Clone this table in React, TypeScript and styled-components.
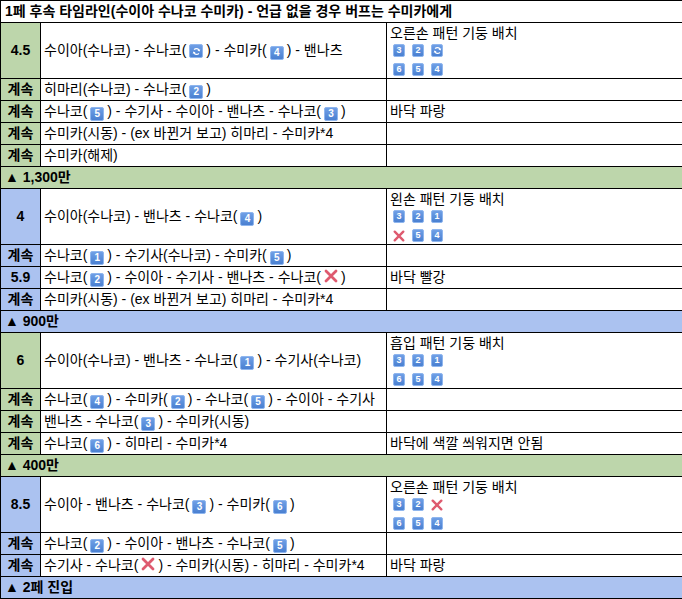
import React from 'react';
import styled, { createGlobalStyle } from 'styled-components';

const GlobalStyle = createGlobalStyle`
  html, body {
    margin: 0;
    padding: 0;
    background: #ffffff;
  }
  body {
    font-family: "Liberation Sans", "Noto Sans CJK KR", sans-serif;
    font-size: 14px;
    color: #000;
  }
`;

const GREEN = '#bdd6ab';
const BLUE = '#abc2f0';

const Table = styled.table`
  width: 682px;
  border-collapse: collapse;
  table-layout: fixed;
`;

const Cell = styled.td`
  border: 1px solid #000;
  height: 21px;
  padding: 0 3px;
  line-height: 17px;
  white-space: nowrap;
  overflow: hidden;
  vertical-align: middle;
`;

const TitleCell = styled(Cell)`
  font-weight: bold;
  padding-left: 4px;
`;

const NumCell = styled(Cell)<{ $bg: string }>`
  background: ${p => p.$bg};
  font-weight: bold;
  text-align: center;
  padding: 0;
`;

const NoteCell = styled(Cell)<{ $tall?: boolean }>`
  vertical-align: ${p => (p.$tall ? 'top' : 'middle')};
  padding-top: ${p => (p.$tall ? '1px' : '0')};
`;

const SectionCell = styled(Cell)<{ $bg: string }>`
  background: ${p => p.$bg};
  font-weight: bold;
  padding-left: 4px;
`;

const TallRow = styled.tr`
  height: 56px;
`;

const NoteTitle = styled.div`
  line-height: 18px;
`;

const Grid = styled.div`
  display: grid;
  grid-template-columns: repeat(3, 12px);
  column-gap: 7px;
  row-gap: 6px;
  padding: 2px 0 0 3px;
`;

const Key = styled.span<{ $inline?: boolean }>`
  display: inline-flex;
  align-items: center;
  justify-content: center;
  box-sizing: border-box;
  width: ${p => (p.$inline ? '14px' : '12px')};
  height: ${p => (p.$inline ? '14px' : '13px')};
  margin: ${p => (p.$inline ? '0 3px' : '0')};
  vertical-align: -1px;
  border-radius: 2px;
  border: 1px solid #8fb6ee;
  background: linear-gradient(#6f9fe6, #4a80d1);
  color: #fff;
  font-family: "Liberation Sans", sans-serif;
  font-weight: bold;
  font-size: ${p => (p.$inline ? '10px' : '9px')};
  line-height: 1;
`;

const Cross = styled.span<{ $inline?: boolean }>`
  display: inline-flex;
  align-items: center;
  justify-content: center;
  width: ${p => (p.$inline ? '14px' : '12px')};
  height: ${p => (p.$inline ? '14px' : '13px')};
  margin: ${p => (p.$inline ? '0 3px' : '0')};
  vertical-align: -1px;
`;

type Token = string;

const Icon: React.FC<{ t: Token; inline?: boolean }> = ({ t, inline }) => {
  if (t === 'x') {
    return (
      <Cross $inline={inline}>
        <svg width="14" height="14" viewBox="0 0 14 14">
          <path d="M2 2 L12 12 M12 2 L2 12" stroke="#de5a6f" strokeWidth="2.8" strokeLinecap="round" />
        </svg>
      </Cross>
    );
  }
  if (t === 'r') {
    return (
      <Key $inline={inline}>
        <svg width="9" height="9" viewBox="0 0 10 10">
          <path d="M8 4 A3.2 3.2 0 0 0 2.4 3" stroke="#fff" strokeWidth="1.4" fill="none" />
          <path d="M2 6 A3.2 3.2 0 0 0 7.6 7" stroke="#fff" strokeWidth="1.4" fill="none" />
          <path d="M9.2 2.4 L8.4 5 L6 4 Z" fill="#fff" />
          <path d="M0.8 7.6 L1.6 5 L4 6 Z" fill="#fff" />
        </svg>
      </Key>
    );
  }
  return <Key $inline={inline}>{t}</Key>;
};

// "{3}" style placeholders in the text become inline key icons
const RichText: React.FC<{ text: string }> = ({ text }) => {
  const parts = text.split(/\{(\w)\}/);
  return (
    <>
      {parts.map((p, i) => (i % 2 === 1 ? <Icon key={i} t={p} inline /> : <React.Fragment key={i}>{p}</React.Fragment>))}
    </>
  );
};

type Row = {
  num: string;
  text: string;
  note?: string;
  grid?: Token[][];
};

type Section = {
  color: string;
  rows: Row[];
  footer: string;
};

const sections: Section[] = [
  {
    color: GREEN,
    footer: '▲ 1,300만',
    rows: [
      { num: '4.5', text: '수이아(수나코) - 수나코({r}) - 수미카({4}) - 밴나츠', note: '오른손 패턴 기둥 배치', grid: [['3', '2', 'r'], ['6', '5', '4']] },
      { num: '계속', text: '히마리(수나코) - 수나코({2})' },
      { num: '계속', text: '수나코({5}) - 수기사 - 수이아 - 밴나츠 - 수나코({3})', note: '바닥 파랑' },
      { num: '계속', text: '수미카(시동) - (ex 바뀐거 보고) 히마리 - 수미카*4' },
      { num: '계속', text: '수미카(해제)' },
    ],
  },
  {
    color: BLUE,
    footer: '▲ 900만',
    rows: [
      { num: '4', text: '수이아(수나코) - 밴나츠 - 수나코({4})', note: '왼손 패턴 기둥 배치', grid: [['3', '2', '1'], ['x', '5', '4']] },
      { num: '계속', text: '수나코({1}) - 수기사(수나코) - 수미카({5})' },
      { num: '5.9', text: '수나코({2}) - 수이아 - 수기사 - 밴나츠 - 수나코({x})', note: '바닥 빨강' },
      { num: '계속', text: '수미카(시동) - (ex 바뀐거 보고) 히마리 - 수미카*4' },
    ],
  },
  {
    color: GREEN,
    footer: '▲ 400만',
    rows: [
      { num: '6', text: '수이아(수나코) - 밴나츠 - 수나코({1}) - 수기사(수나코)', note: '흡입 패턴 기둥 배치', grid: [['3', '2', '1'], ['6', '5', '4']] },
      { num: '계속', text: '수나코({4}) - 수미카({2}) - 수나코({5}) - 수이아 - 수기사' },
      { num: '계속', text: '밴나츠 - 수나코({3}) - 수미카(시동)' },
      { num: '계속', text: '수나코({6}) - 히마리 - 수미카*4', note: '바닥에 색깔 씌워지면 안됨' },
    ],
  },
  {
    color: BLUE,
    footer: '▲ 2페 진입',
    rows: [
      { num: '8.5', text: '수이아 - 밴나츠 - 수나코({3}) - 수미카({6})', note: '오른손 패턴 기둥 배치', grid: [['3', '2', 'x'], ['6', '5', '4']] },
      { num: '계속', text: '수나코({2}) - 수이아 - 밴나츠 - 수나코({5})' },
      { num: '계속', text: '수기사 - 수나코({x}) - 수미카(시동) - 히마리 - 수미카*4', note: '바닥 파랑' },
    ],
  },
];

const TimelineRow: React.FC<{ row: Row; color: string }> = ({ row, color }) => {
  const tall = !!row.grid;
  const cells = (
    <>
      <NumCell $bg={color}>{row.num}</NumCell>
      <Cell>
        <RichText text={row.text} />
      </Cell>
      <NoteCell $tall={tall}>
        {tall ? <NoteTitle>{row.note}</NoteTitle> : row.note}
        {row.grid && (
          <Grid>
            {row.grid.flat().map((t, i) => (
              <Icon key={i} t={t} />
            ))}
          </Grid>
        )}
      </NoteCell>
    </>
  );
  return tall ? <TallRow>{cells}</TallRow> : <tr>{cells}</tr>;
};

export default function App() {
  return (
    <>
      <GlobalStyle />
      <Table>
        <colgroup>
          <col style={{ width: 40 }} />
          <col style={{ width: 346 }} />
          <col style={{ width: 296 }} />
        </colgroup>
        <tbody>
          <tr>
            <TitleCell colSpan={3}>1페 후속 타임라인(수이아 수나코 수미카) - 언급 없을 경우 버프는 수미카에게</TitleCell>
          </tr>
          {sections.map((s, si) => (
            <React.Fragment key={si}>
              {s.rows.map((r, ri) => (
                <TimelineRow key={ri} row={r} color={s.color} />
              ))}
              <tr>
                <SectionCell colSpan={3} $bg={s.color}>
                  {s.footer}
                </SectionCell>
              </tr>
            </React.Fragment>
          ))}
        </tbody>
      </Table>
    </>
  );
}
